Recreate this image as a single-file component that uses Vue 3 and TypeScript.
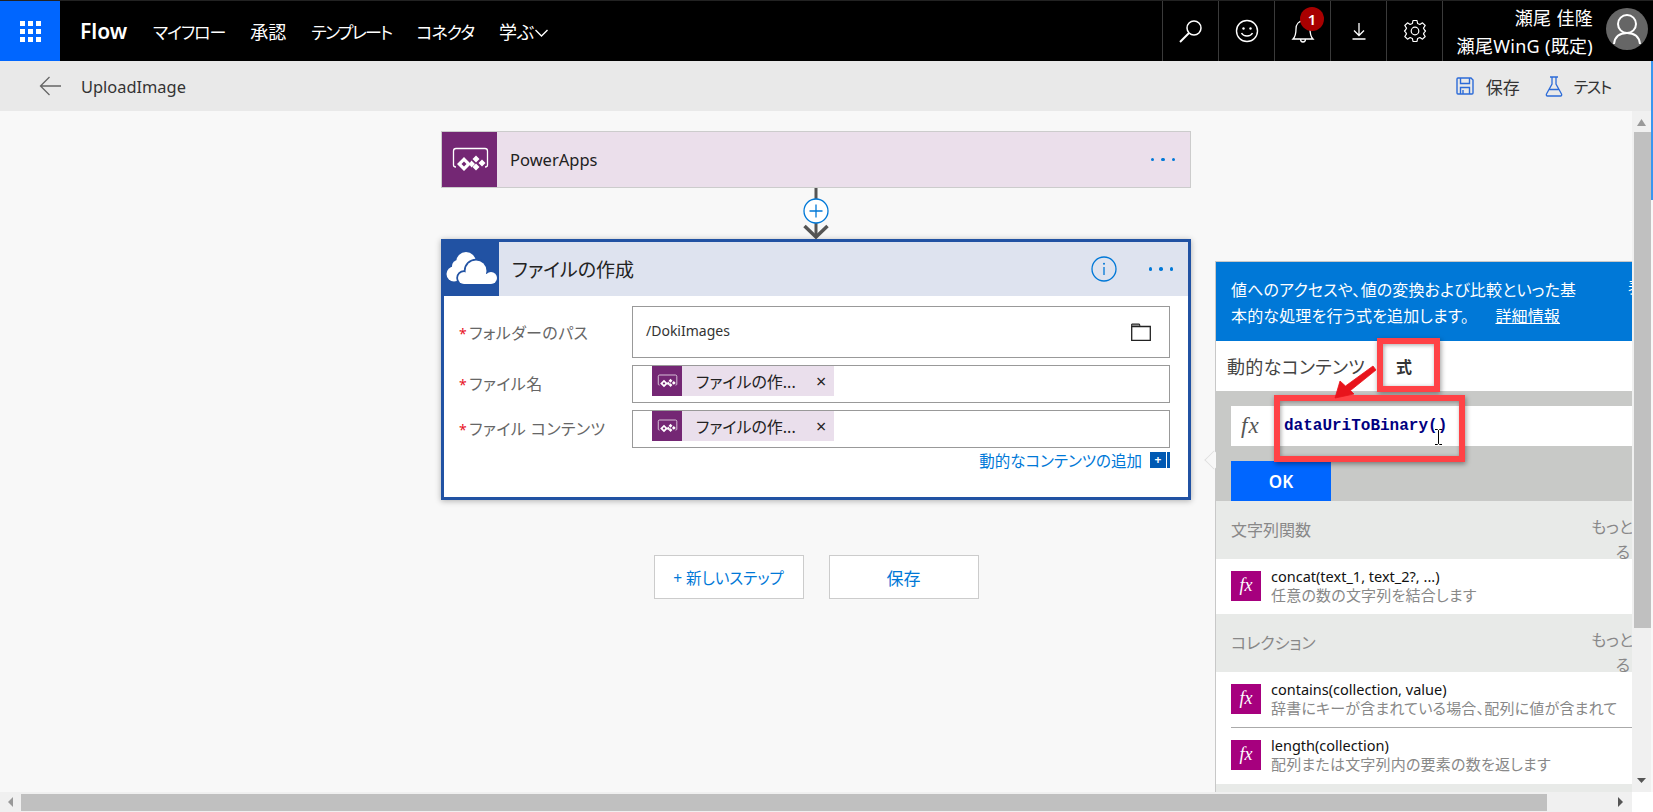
<script setup lang="ts">
interface NavItem {
  label: string
  kana: boolean
}
const navItems: NavItem[] = [
  { label: 'マイフロー', kana: true },
  { label: '承認', kana: false },
  { label: 'テンプレート', kana: true },
  { label: 'コネクタ', kana: true },
]
</script>

<template>
  <div class="app">
    <svg class="defs" width="0" height="0" aria-hidden="true">
      <symbol id="pa" viewBox="0 0 55 55">
        <path d="M14 35 C12 35 11.5 34 11.5 33 V19 C11.500 17.500 12.500 16.500 14 16.500 H43 C44.500 16.500 45.500 17.500 45.500 19 V33 C45.500 34 45 35 43 35" fill="none" stroke="#fff" stroke-width="1.300" />
        <path d="M22 25 L29 32 L22 39 L15 32 Z M22 29.500 L19.500 32 L22 34.500 L24.500 32 Z" fill="#fff" fill-rule="evenodd" />
        <path d="M34 23.500 L37.500 27 L34 30.500 L30.500 27 Z M34 31.500 L37.500 35 L34 38.500 L30.500 35 Z M40 27.500 L43.500 31 L40 34.500 L36.500 31 Z M29.500 28.500 L33 32 L29.500 35.500 L27 32 Z" fill="#fff" />
      </symbol>
    </svg>

    <header class="topbar">
      <div class="waffle"><i v-for="n in 9" :key="n"></i></div>
      <div class="brand">Flow</div>
      <nav class="nav">
        <span v-for="item in navItems" :key="item.label" :class="{ kana: item.kana }">{{ item.label }}</span>
        <span class="learn">学ぶ<svg width="15" height="8" viewBox="0 0 15 8"><path d="M1.500 1 L7.500 7 L13.500 1" fill="none" stroke="#fff" stroke-width="1.400" /></svg></span>
      </nav>
      <div class="spacer"></div>
      <div class="tool">
        <svg width="28" height="28" viewBox="0 0 28 28"><circle cx="17" cy="11" r="7" fill="none" stroke="#fff" stroke-width="1.500" /><path d="M12 16 L3 25" stroke="#fff" stroke-width="2" /></svg>
      </div>
      <div class="tool">
        <svg width="26" height="26" viewBox="0 0 26 26"><circle cx="13" cy="13" r="10.500" fill="none" stroke="#fff" stroke-width="1.400" /><circle cx="9.500" cy="10.500" r="1.200" fill="#fff" /><circle cx="16.500" cy="10.500" r="1.200" fill="#fff" /><path d="M7.500 15 C9.500 19 16.500 19 18.500 15" fill="none" stroke="#fff" stroke-width="1.400" /></svg>
      </div>
      <div class="tool bell">
        <svg width="24" height="26" viewBox="0 0 24 26"><path d="M2 21 C5 18 5 14 5 11 C5 6 8 3 12 3 C16 3 19 6 19 11 C19 14 19 18 22 21 Z M9.500 21 C9.500 25 14.500 25 14.500 21" fill="none" stroke="#fff" stroke-width="1.300" /></svg>
        <span class="badge">1</span>
      </div>
      <div class="tool">
        <svg width="16" height="20" viewBox="0 0 16 20"><path d="M8 2 V14 M3 9.500 L8 14.500 L13 9.500 M1.500 18 H14.500" fill="none" stroke="#fff" stroke-width="1.300" /></svg>
      </div>
      <div class="tool">
        <svg width="24" height="24" viewBox="0 0 24 24"><path d="M10 1.500 H14 L14.600 4.500 L16.900 5.500 L19.500 3.800 L22.200 6.500 L20.500 9.100 L21.500 11 L22.500 12 L21.500 13 L20.500 14.900 L22.200 17.500 L19.500 20.200 L16.900 18.500 L14.600 19.500 L14 22.500 H10 L9.400 19.500 L7.100 18.500 L4.500 20.200 L1.800 17.500 L3.500 14.900 L2.500 13 L1.500 12 L2.500 11 L3.500 9.100 L1.800 6.500 L4.500 3.800 L7.100 5.500 L9.400 4.500 Z" fill="none" stroke="#fff" stroke-width="1.200" stroke-linejoin="round" /><circle cx="12" cy="12" r="3.800" fill="none" stroke="#fff" stroke-width="1.200" /></svg>
      </div>
      <div class="user">
        <div class="user-text">
          <div>瀬尾 佳隆</div>
          <div>瀬尾WinG (既定)</div>
        </div>
        <div class="avatar">
          <svg width="42" height="42" viewBox="0 0 42 42"><circle cx="21" cy="16" r="9" fill="none" stroke="#fff" stroke-width="2" /><path d="M8 36 C9 27 15 25 21 25 C27 25 33 27 34 36" fill="none" stroke="#fff" stroke-width="2" /></svg>
        </div>
      </div>
    </header>

    <div class="subbar">
      <svg class="back" width="22" height="20" viewBox="0 0 22 20"><path d="M10.500 1 L1.500 10 L10.500 19 M1.500 10 H22" fill="none" stroke="#666" stroke-width="1.300" /></svg>
      <span class="flow-name">UploadImage</span>
      <div class="spacer"></div>
      <button class="cmd save">
        <svg width="18" height="18" viewBox="0 0 18 18"><path d="M1 2 C1 1.400 1.400 1 2 1 H15 L17 3 V16 C17 16.600 16.600 17 16 17 H2 C1.400 17 1 16.600 1 16 Z M4.500 1 V6.500 H13.500 V1 M4.500 17 V10.500 H13.500 V17 M7 13 V17" fill="none" stroke="#2c6bd8" stroke-width="1.400" /></svg>
        <span>保存</span>
      </button>
      <button class="cmd test">
        <svg width="18" height="21" viewBox="0 0 18 21"><path d="M5 1 H13 M7 1 V8 L1.500 18 C1 19 1.500 20 2.500 20 H15.500 C16.500 20 17 19 16.500 18 L11 8 V1 M4.500 13.500 H13.500" fill="none" stroke="#2c6bd8" stroke-width="1.300" /></svg>
        <span>テスト</span>
      </button>
    </div>

    <div class="work">
      <main class="canvas">
        <div class="flow">
          <div class="trigger">
            <div class="pa-icon big"><svg width="55" height="55"><use href="#pa" /></svg></div>
            <span class="trigger-title">PowerApps</span>
            <div class="dots pa-dots"><i></i><i></i><i></i></div>
          </div>

          <svg class="connector" width="30" height="51" viewBox="0 0 30 51">
            <path d="M15 0 V49" stroke="#555" stroke-width="3" />
            <path d="M3.500 38 L15 49 L26.500 38" fill="none" stroke="#555" stroke-width="3.500" />
            <circle cx="15" cy="23" r="12" fill="#fff" stroke="#0078d7" stroke-width="1.300" />
            <path d="M15 16.500 V29.500 M8.500 23 H21.500" stroke="#0078d7" stroke-width="1.300" />
          </svg>

          <section class="action">
            <div class="action-head">
              <div class="od-icon">
                <svg width="55" height="54" viewBox="2 0 55 54">
                  <g fill="#fff">
                    <circle cx="24" cy="20" r="10" />
                    <circle cx="12" cy="32" r="7.500" />
                    <circle cx="16" cy="24" r="6" />
                    <rect x="10" y="24" width="26" height="15" />
                  </g>
                  <g fill="#2152a3" stroke="#2152a3" stroke-width="3.500">
                    <circle cx="34" cy="29" r="10.500" />
                    <circle cx="22" cy="36" r="6" />
                    <circle cx="49" cy="36" r="6" />
                    <rect x="22" y="34" width="27" height="8" />
                  </g>
                  <g fill="#fff">
                    <circle cx="34" cy="29" r="10.500" />
                    <circle cx="22" cy="36" r="6" />
                    <circle cx="49" cy="36" r="6" />
                    <rect x="22" y="32" width="27" height="10" />
                  </g>
                </svg>
              </div>
              <span class="action-title">ファイルの作成</span>
              <svg class="info" width="26" height="26" viewBox="0 0 26 26"><circle cx="13" cy="13" r="12" fill="none" stroke="#0078d7" stroke-width="1.300" /><circle cx="13" cy="7.800" r="1" fill="#0078d7" /><path d="M13 11 V19" stroke="#0078d7" stroke-width="1.300" /></svg>
              <div class="dots"><i></i><i></i><i></i></div>
            </div>
            <div class="form">
              <div class="field tall">
                <label><b>*</b>フォルダーのパス</label>
                <div class="input path-input">
                  <span>/DokiImages</span>
                  <svg width="20" height="18" viewBox="0 0 20 18"><path d="M0.700 3.500 H19.300 V17.300 H0.700 Z" fill="#fff" stroke="#222" stroke-width="1.300" /><path d="M0.700 3.500 V1 H8.500 L9 3.500 Z" fill="#888" stroke="#222" stroke-width="1" /></svg>
                </div>
              </div>
              <div class="field">
                <label><b>*</b>ファイル名</label>
                <div class="input">
                  <div class="token">
                    <div class="pa-icon small"><svg width="30" height="30"><use href="#pa" /></svg></div>
                    <span class="token-text">ファイルの作...</span>
                    <span class="token-x">×</span>
                  </div>
                </div>
              </div>
              <div class="field">
                <label><b>*</b>ファイル コンテンツ</label>
                <div class="input">
                  <div class="token">
                    <div class="pa-icon small"><svg width="30" height="30"><use href="#pa" /></svg></div>
                    <span class="token-text">ファイルの作...</span>
                    <span class="token-x">×</span>
                  </div>
                </div>
              </div>
              <div class="add-dyn">
                <span>動的なコンテンツの追加</span>
                <i class="add-box">+</i>
                <i class="add-bar"></i>
              </div>
            </div>
          </section>

          <div class="steps">
            <button class="step">+ 新しいステップ</button>
            <button class="step step-save">保存</button>
          </div>
        </div>

        <aside class="panel">
          <span class="beak"></span>
          <div class="panel-info">
            <p>値へのアクセスや、値の変換および比較といった基<br />本的な処理を行う式を追加します。 <u>詳細情報</u></p>
            <span class="panel-hide">表</span>
          </div>
          <div class="tabs">
            <span class="tab">動的なコンテンツ</span>
            <span class="tab active">式</span>
          </div>
          <div class="expr">
            <div class="expr-input">
              <span class="fx-label">fx</span>
              <code>dataUriToBinary()</code>
              <svg class="ibeam" width="9" height="16" viewBox="0 0 9 16"><path d="M1 0.500 H3.500 L4.500 1.500 L5.500 0.500 H8 M4.500 1.500 V14.500 M1 15.500 H3.500 L4.500 14.500 L5.500 15.500 H8" fill="none" stroke="#000" stroke-width="1" /></svg>
            </div>
            <button class="ok">OK</button>
          </div>

          <div class="section">
            <span>文字列関数</span>
            <div class="more"><div>もっと</div><div class="more-2">る</div></div>
          </div>
          <div class="fn">
            <div class="fx-icon">fx</div>
            <div class="fn-text">
              <div class="fn-name">concat(text_1, text_2?, ...)</div>
              <div class="fn-desc">任意の数の文字列を結合します</div>
            </div>
          </div>

          <div class="section">
            <span>コレクション</span>
            <div class="more"><div>もっと</div><div class="more-2">る</div></div>
          </div>
          <div class="fn ruled">
            <div class="fx-icon">fx</div>
            <div class="fn-text">
              <div class="fn-name">contains(collection, value)</div>
              <div class="fn-desc">辞書にキーが含まれている場合、配列に値が含まれて</div>
            </div>
          </div>
          <div class="fn">
            <div class="fx-icon">fx</div>
            <div class="fn-text">
              <div class="fn-name">length(collection)</div>
              <div class="fn-desc">配列または文字列内の要素の数を返します</div>
            </div>
          </div>
          <div class="section"></div>

          <span class="mark mark-tab"></span>
          <span class="mark mark-input"></span>
          <svg class="mark-arrow" width="46" height="36" viewBox="0 0 46 36">
            <path d="M2 34 L7 17 L12.500 22 L40 2 L43 6 L17.500 26.500 L21 30 Z" fill="#e8141c" stroke="#e8141c" stroke-width="0.800" stroke-linejoin="round" />
          </svg>
        </aside>
      </main>
      <div class="vbar">
        <svg width="19" height="21" viewBox="0 0 19 21"><path d="M5 15 L9.500 8 L14 15 Z" fill="#999" /></svg>
        <div class="vthumb"></div>
        <div class="spacer"></div>
        <svg width="19" height="21" viewBox="0 0 19 21"><path d="M5 7 H14 L9.500 12 Z" fill="#555" /></svg>
      </div>
    </div>

    <div class="hbar">
      <div class="harrow"><svg width="21" height="20" viewBox="0 0 21 20"><path d="M13 5 V15 L8 10 Z" fill="#999" /></svg></div>
      <div class="hthumb"></div>
      <div class="spacer"></div>
      <div class="harrow"><svg width="21" height="20" viewBox="0 0 21 20"><path d="M7 5 V15 L12 10 Z" fill="#555" /></svg></div>
      <div class="hcorner"></div>
    </div>
    <div class="edge"></div>
  </div>
</template>

<style>
html, body { margin: 0; padding: 0; overflow: hidden; background: #f8f8f8; }
</style>

<style scoped>
.app {
  position: relative;
  height: 812px;
  width: 1653px;
  display: flex;
  flex-direction: column;
  overflow: hidden;
  font-family: "Noto Sans", "Noto Sans CJK JP", sans-serif;
  font-feature-settings: "palt";
  color: #222;
  background: #f8f8f8;
}
.defs { position: absolute; }
.spacer { flex: 1; }

.topbar {
  height: 61px;
  box-sizing: border-box;
  border-top: 1px solid #222;
  background: #000;
  color: #fff;
  display: flex;
  align-items: stretch;
  flex-shrink: 0;
}
.waffle {
  width: 60px;
  background: #0066ff;
  display: grid;
  grid-template-columns: repeat(3, 5px);
  grid-auto-rows: 5px;
  gap: 3px;
  justify-content: center;
  align-content: center;
}
.waffle i { background: #fff; display: block; }
.brand {
  margin-left: 20px;
  font-size: 21px;
  font-weight: 600;
  line-height: 60px;
  width: 73px;
}
.nav {
  display: flex;
  align-items: center;
  gap: 25px;
  font-size: 18px;
  white-space: nowrap;
}
.nav .kana { font-size: 17px; letter-spacing: -1.100px; }
.nav .kana:nth-child(3) { letter-spacing: -1.700px; }
.learn { display: flex; align-items: center; }
.learn svg { margin-top: 3px; }
.tool {
  width: 56px;
  box-sizing: border-box;
  border-left: 1px solid #3a3a3a;
  display: flex;
  align-items: center;
  justify-content: center;
  position: relative;
}
.badge {
  position: absolute;
  left: 25px;
  top: 6px;
  width: 24px;
  height: 24px;
  border-radius: 50%;
  background: #a80000;
  color: #fff;
  font-size: 15px;
  font-weight: 600;
  line-height: 24px;
  text-align: center;
}
.user {
  width: 211px;
  box-sizing: border-box;
  border-left: 1px solid #3a3a3a;
  display: flex;
  align-items: center;
}
.user-text {
  width: 150px;
  text-align: right;
  font-size: 18px;
  letter-spacing: 0.300px;
  line-height: 28px;
  white-space: nowrap;
  margin-top: 2px;
}
.avatar {
  margin-left: 13px;
  width: 42px;
  height: 42px;
  border-radius: 50%;
  background: #666;
  margin-top: -4px;
}

.subbar {
  height: 50px;
  background: #e9e9e9;
  display: flex;
  align-items: center;
  flex-shrink: 0;
}
.back { margin-left: 39px; }
.flow-name { margin-left: 20px; font-size: 16.400px; color: #333; }
.cmd {
  border: 0;
  background: none;
  padding: 0;
  display: flex;
  align-items: center;
  font: inherit;
  color: #333;
}
.cmd.save span { margin-left: 12px; font-size: 17px; }
.cmd.test { margin-left: 25px; margin-right: 42px; }
.cmd.test span { margin-left: 11px; font-size: 16px; letter-spacing: -1.300px; }

.work { flex: 1; min-height: 0; display: flex; }
.canvas {
  width: 1632px;
  flex-shrink: 0;
  display: flex;
  align-items: flex-start;
  overflow: hidden;
  padding: 20px 0 0 441px;
  box-sizing: border-box;
  background: #f8f8f8;
}
.flow {
  width: 750px;
  flex-shrink: 0;
  display: flex;
  flex-direction: column;
  align-items: center;
}
.trigger {
  width: 100%;
  height: 57px;
  box-sizing: border-box;
  border: 1px solid #cccccc;
  background: #ebdfeb;
  display: flex;
  align-items: center;
}
.pa-icon { background: #742774; flex-shrink: 0; display: flex; }
.pa-icon.big { width: 55px; height: 55px; }
.pa-icon.small { width: 30px; height: 30px; }
.trigger-title { margin-left: 13px; font-size: 16.500px; color: #222; flex: 1; }
.dots { display: flex; gap: 7px; }
.dots i { width: 3.500px; height: 3.500px; border-radius: 50%; background: #0078d7; display: block; }
.pa-dots { margin-right: 15px; }
.connector { display: block; flex-shrink: 0; }

.action {
  width: 100%;
  height: 261px;
  box-sizing: border-box;
  border: 3px solid #2152a3;
  background: #fff;
  box-shadow: 0 1px 6px rgba(0, 0, 0, 0.3);
  display: flex;
  flex-direction: column;
}
.action-head {
  height: 54px;
  background: #dee3ef;
  display: flex;
  align-items: center;
  flex-shrink: 0;
}
.od-icon { width: 55px; height: 54px; background: #2152a3; flex-shrink: 0; }
.action-title { margin-left: 13px; font-size: 19px; color: #222; flex: 1; }
.info { margin-right: 32px; }
.action-head .dots { margin-right: 15px; }

.form { padding: 10px 18px 0 15px; display: flex; flex-direction: column; }
.field { display: flex; align-items: center; margin-bottom: 7px; }
.field label {
  width: 173px;
  flex-shrink: 0;
  font-size: 16px;
  letter-spacing: 0.400px;
  color: #666;
  white-space: nowrap;
}
.field:not(.tall) label { margin-top: -3px; }
.field label b { color: #e81123; font-weight: 400; margin-right: 2px; font-size: 14px; }
.input {
  flex: 1;
  height: 38px;
  box-sizing: border-box;
  border: 1px solid #999;
  padding: 0 0 0 19px;
  background: #fff;
  display: flex;
  align-items: flex-start;
}
.field.tall .input { height: 52px; }
.path-input {
  padding: 0 18px 0 13px;
  align-items: center;
  justify-content: space-between;
  font-size: 14px;
  color: #333;
}
.path-input span { margin-top: -4px; }
.token {
  height: 30px;
  width: 182px;
  background: #eadfec;
  display: flex;
  align-items: center;
}
.token-text { margin-left: 14px; font-size: 16px; color: #222; width: 120px; white-space: nowrap; }
.token-x { font-size: 18px; color: #222; }
.add-dyn {
  display: flex;
  justify-content: flex-end;
  align-items: center;
  color: #0078d7;
  font-size: 15.500px;
  height: 16px;
  margin-top: -3px;
}
.add-box {
  margin-left: 8px;
  width: 16px;
  height: 16px;
  background: #0059b3;
  color: #fff;
  font-style: normal;
  font-weight: 700;
  font-size: 12px;
  line-height: 15px;
  text-align: center;
}
.add-bar { margin-left: 1px; width: 3px; height: 16px; background: #0059b3; display: block; }

.steps { display: flex; gap: 25px; margin-top: 55px; }
.step {
  width: 150px;
  height: 44px;
  box-sizing: border-box;
  border: 1px solid #ccc;
  background: #fff;
  color: #0078d7;
  font: inherit;
  font-size: 15.500px;
}
.step-save { font-size: 17px; }

.panel {
  position: relative;
  width: 417px;
  flex-shrink: 0;
  margin-left: 24px;
  margin-top: 130px;
  box-sizing: border-box;
  border-left: 1px solid #c8c8c8;
  border-top: 1px solid #c8c8c8;
  background: #fff;
  height: 531px;
}
.beak {
  position: absolute;
  left: -10px;
  top: 190px;
  width: 15px;
  height: 15px;
  background: #f8f8f8;
  border-left: 1px solid #ddd;
  border-bottom: 1px solid #ddd;
  transform: rotate(45deg) scale(0.85);
  display: block;
}
.panel-info {
  height: 79px;
  background: #0078d7;
  color: #fff;
  padding: 0 0 0 15px;
  font-size: 16px;
  line-height: 26px;
  display: flex;
  overflow: hidden;
  position: relative;
}
.panel-info p { margin: 15px 0 0; width: 397px; flex-shrink: 0; white-space: nowrap; letter-spacing: 0.150px; }
.panel-info u { margin-left: 22px; }
.panel-hide { margin-top: 12px; white-space: nowrap; flex-shrink: 0; }
.tabs {
  height: 50px;
  display: flex;
  align-items: center;
  background: #fff;
  padding-left: 11px;
  font-size: 18px;
  letter-spacing: 0.300px;
  color: #444;
  position: relative;
}
.tab.active { margin-left: 31px; font-size: 16px; font-weight: 700; color: #333; }
.expr {
  height: 110px;
  box-sizing: border-box;
  background: #c8c9c7;
  padding: 15px 0 0 15px;
  position: relative;
}
.expr-input {
  height: 40px;
  background: #fff;
  display: flex;
  align-items: center;
  position: relative;
}
.fx-label {
  font-family: "Liberation Serif", serif;
  font-style: italic;
  font-size: 23px;
  color: #555;
  margin-left: 10px;
  width: 43px;
  letter-spacing: 1px;
}
.expr-input code {
  font-family: "Liberation Mono", monospace;
  font-weight: 700;
  font-size: 16px;
  color: #000080;
}
.ibeam { position: absolute; left: 203px; top: 23px; }
.ok {
  display: block;
  margin-top: 15px;
  width: 100px;
  height: 40px;
  border: 0;
  background: #0066ff;
  color: #fff;
  font: inherit;
  font-weight: 600;
  font-size: 17px;
}
.section {
  height: 58px;
  background: #e8eae8;
  padding-left: 15px;
  display: flex;
  justify-content: space-between;
  overflow: hidden;
  font-size: 16px;
  color: #888;
}
.section > span { line-height: 58px; }
.more {
  width: 41px;
  overflow: hidden;
  white-space: nowrap;
  line-height: 25px;
  padding-top: 14px;
}
.more-2 { text-align: right; padding-right: 2px; }
.fn {
  height: 56px;
  background: #fff;
  padding: 0 0 0 15px;
  display: flex;
  align-items: flex-start;
  overflow: hidden;
}
.section + .fn:not(.ruled) { height: 55px; }
.fx-icon {
  width: 30px;
  height: 30px;
  margin-top: 12px;
  background: #a6007e;
  color: #fff;
  font-family: "Liberation Serif", serif;
  font-style: italic;
  font-size: 18px;
  line-height: 29px;
  text-align: center;
  flex-shrink: 0;
}
.fn-text { margin-left: 10px; padding-top: 7px; flex: 1; min-width: 0; }
.fn-name { font-size: 14.500px; line-height: 20px; color: #111; white-space: nowrap; }
.fn-desc { font-size: 15px; letter-spacing: 0.200px; line-height: 19px; color: #888; white-space: nowrap; overflow: hidden; }
.fn.ruled { position: relative; }
.fn.ruled::after {
  content: "";
  position: absolute;
  left: 15px;
  right: 0;
  bottom: 0;
  height: 1px;
  background: #aaa;
}

.mark {
  position: absolute;
  border-style: solid;
  border-color: #ff4246;
  box-sizing: border-box;
  box-shadow: 1px 2px 5px rgba(0, 0, 0, 0.4), inset 1px 1px 4px rgba(0, 0, 0, 0.35);
  display: block;
}
.mark-tab { left: 161px; top: 76px; width: 63px; height: 54px; border-width: 6px; }
.mark-input { left: 58px; top: 133px; width: 191px; height: 67px; border-width: 6px; }
.mark-arrow { position: absolute; left: 117px; top: 102px; }

.vbar {
  width: 19px;
  flex-shrink: 0;
  background: #f0f0f0;
  display: flex;
  flex-direction: column;
}
.vbar svg { display: block; flex-shrink: 0; }
.vthumb { margin-left: 2px; width: 17px; height: 496px; background: #c0c0c0; }
.edge { position: absolute; right: 0; top: 61px; width: 2px; height: 139px; background: #3a96f0; }

.hbar {
  height: 20px;
  flex-shrink: 0;
  background: #f0f0f0;
  display: flex;
  align-items: stretch;
}
.harrow { width: 21px; display: flex; align-items: center; }
.hthumb { width: 1526px; margin: 2px 0 1px; background: #c0c0c0; }
.hcorner { width: 21px; background: #fff; }
</style>
